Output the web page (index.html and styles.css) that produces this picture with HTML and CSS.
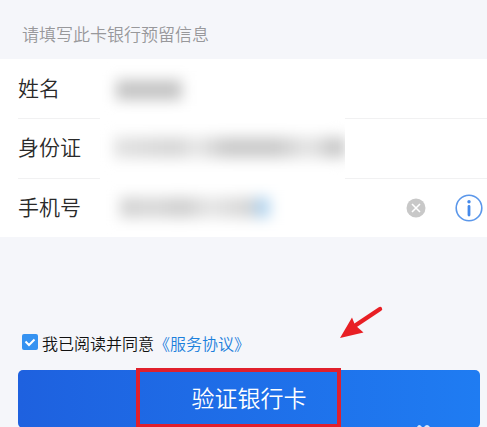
FILE: index.html
```html
<!DOCTYPE html>
<html lang="zh-CN">
<head>
  <meta charset="UTF-8" />
  <meta name="viewport" content="width=device-width, initial-scale=1.0" />
  <title>验证银行卡</title>
  <link rel="stylesheet" href="styles.css">
</head>
<body>
  <form class="page">
    <p class="hint">请填写此卡银行预留信息</p>

    <div class="card">
      <div class="row">
        <label for="name">姓名</label>
        <div class="field"><input class="masked masked-name" type="text" id="name" /></div>
      </div>
      <div class="row">
        <label for="idcard">身份证</label>
        <div class="field"><input class="masked masked-id" type="text" id="idcard" /></div>
      </div>
      <div class="row">
        <label for="phone">手机号</label>
        <div class="field"><input class="masked masked-phone" type="tel" id="phone" /></div>
        <div class="tools">
          <button type="button" class="icon-btn" aria-label="清除">
            <svg width="20" height="20" viewBox="0 0 20 20">
              <circle cx="10" cy="10" r="9.5" fill="#c8c8c8" />
              <path d="M6 6l8 8M14 6l-8 8" stroke="#fff" stroke-width="1.6" />
            </svg>
          </button>
          <button type="button" class="icon-btn" aria-label="说明">
            <svg width="28" height="28" viewBox="0 0 28 28">
              <circle cx="14" cy="14" r="12.8" fill="none" stroke="#5b97ea" stroke-width="1.6" />
              <circle cx="14" cy="7.7" r="1.7" fill="#4489ea" />
              <path d="M14 12.500v8.500" stroke="#4489ea" stroke-width="2.8" stroke-linecap="round" />
            </svg>
          </button>
        </div>
      </div>
    </div>

    <div class="agree">
      <input type="checkbox" id="agree" checked />
      <label for="agree">我已阅读并同意</label>
      <a href="#">《服务协议》</a>
    </div>

    <div class="submit">
      <button type="submit" class="submit-btn">验证银行卡</button>
      <span class="mark"></span>
      <svg class="arrow" width="46" height="34" viewBox="0 0 46 34">
        <path d="M42 4L18 20" stroke="#e81f24" stroke-width="4.4" stroke-linecap="round" />
        <path d="M2 33L14 12.5L17 20L25.500 27.500Z" fill="#e81f24" />
      </svg>
      <svg class="dots" width="16" height="3" viewBox="0 0 16 3">
        <path d="M1 3Q3-1 6 3ZM8 3Q11-1 14 3Z" fill="#d5e6fd" />
      </svg>
    </div>
  </form>
</body>
</html>
```

FILE: styles.css
```css
* {
  box-sizing: border-box;
}

body {
  margin: 0;
  font-family: "Noto Sans CJK SC", sans-serif;
  font-weight: 350;
  background: #f5f6fa;
  color: #2a2a2a;
  overflow: hidden;
}

.hint {
  margin: 0;
  padding: 22px 22px 13px;
  font-size: 17px;
  line-height: 24px;
  color: #98989b;
}

.card {
  background: #fff;
}

.row {
  position: relative;
  display: grid;
  grid-template-columns: 82px 245px 1fr;
  align-items: center;
  height: 60px;
  padding-left: 18px;
}

.row:first-child,
.row:last-child {
  height: 59px;
}

/* divider between rows */
.row + .row::before {
  content: "";
  position: absolute;
  top: 0;
  left: 18px;
  right: 0;
  height: 1px;
  background: #f1f1f2;
}

.row label {
  padding-bottom: 4px;
  font-size: 21px;
  line-height: 32px;
}

.field {
  position: relative;
  height: 100%;
  background: #fff;
  overflow: hidden;
}

.masked {
  display: block;
  width: 100%;
  height: 100%;
  padding: 0;
  border: none;
  outline: none;
  filter: blur(7px);
  background-repeat: no-repeat;
}

.masked-name {
  background-image: linear-gradient(#c4c4c4, #c4c4c4);
  background-size: 66px 20px;
  background-position: 16px 21px;
}

.masked-id {
  background-image: linear-gradient(90deg, #e2e2e2, #d6d6d6 25%, #e8e8e8 33%, #cbcbcb 45%, #cbcbcb 65%, #e6e6e6 78%, #c4c4c4 90%);
  background-size: 250px 21px;
  background-position: 14px 19px;
}

.masked-phone {
  background-image: linear-gradient(90deg, #d2d2d2, #dadada 22%, #cfcfcf 42%, #e6e6e6 60%, #d4d4d4 88%, #b4d5ef 92%);
  background-size: 150px 21px;
  background-position: 20px 19px;
}

.tools {
  display: flex;
  justify-content: flex-end;
  align-items: center;
  gap: 29px;
  padding-right: 4px;
}

.icon-btn {
  display: flex;
  padding: 0;
  border: none;
  background: none;
  cursor: pointer;
}

.agree {
  display: flex;
  align-items: center;
  padding: 94px 22px 15px;
  font-size: 16px;
  line-height: 24px;
  color: #111;
}

.agree input {
  appearance: none;
  width: 16px;
  height: 16px;
  margin: 0 4px 2px 0;
  border-radius: 2px;
  background: #3592f1 url("data:image/svg+xml,%3Csvg xmlns='http://www.w3.org/2000/svg' viewBox='0 0 16 16'%3E%3Cpath d='M3.500 7.500l3.500 3.500 5.500-5.500' fill='none' stroke='white' stroke-width='2'/%3E%3C/svg%3E") center / 16px;
}

.agree a {
  color: #1c80dc;
  text-decoration: none;
}

.submit {
  position: relative;
  margin: 0 7px 0 18px;
}

.submit-btn {
  display: block;
  width: 100%;
  height: 58px;
  padding: 0 0 4px;
  border: none;
  border-radius: 5px;
  background: linear-gradient(90deg, #1e61df, #1f7cf2);
  color: #fff;
  font-family: inherit;
  font-size: 23px;
  font-weight: inherit;
  line-height: 34px;
  cursor: pointer;
}

/* red frame and arrow pointing at the button */
.mark {
  position: absolute;
  top: -2px;
  left: 118px;
  width: 205px;
  height: 60px;
  border: 4px solid #e0202c;
  pointer-events: none;
}

.arrow {
  position: absolute;
  top: -65px;
  left: 320px;
}

.dots {
  position: absolute;
  top: 54px;
  left: 398px;
}
```
